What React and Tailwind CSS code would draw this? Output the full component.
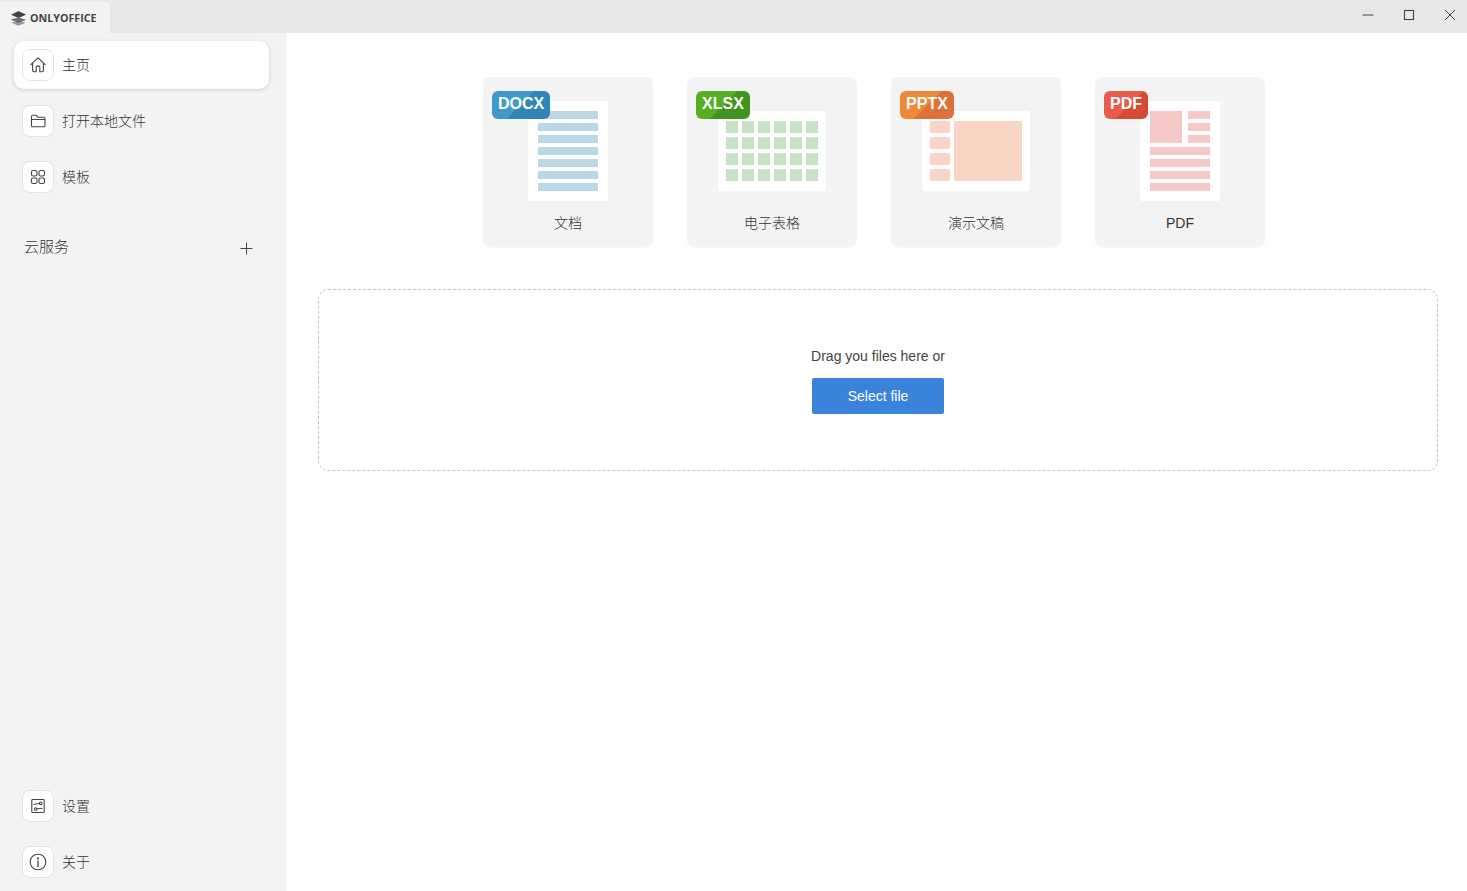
import React from "react";

const cjk = "font-['Liberation_Sans','Noto_Sans_CJK_SC',sans-serif]";

function Range({ n }) {
  return Array.from({ length: n }, (_, i) => i);
}

const I = { fill: "none", stroke: "#444", strokeWidth: 1.1, strokeLinejoin: "round", strokeLinecap: "round" };

function HomeIcon() {
  return (
    <svg width="16" height="16" viewBox="0 0 16 16" {...I}>
      <path d="M.8 7.6 8 .9l7.2 6.7M2.6 6.3v7.2c0 .7.5 1.2 1.2 1.2h2.4V10c0-.5.4-.9.9-.9h1.800c.5 0 .9.4.9.9v4.700h2.400c.7 0 1.200-.5 1.200-1.200V6.300" />
    </svg>
  );
}
function FolderIcon() {
  return (
    <svg width="16" height="16" viewBox="0 0 16 16" {...I}>
      <path d="M1.500 3.500c0-.8.5-1.300 1.300-1.300h3.400l1.500 2h6c.8 0 1.300.5 1.300 1.300v7c0 .8-.5 1.300-1.300 1.300H2.800c-.8 0-1.300-.5-1.300-1.300zM1.500 6.500h13" />
    </svg>
  );
}
function GridIcon() {
  return (
    <svg width="16" height="16" viewBox="0 0 16 16" {...I}>
      <rect x="1.500" y="1.500" width="5.500" height="5.500" rx="1.600" />
      <rect x="9" y="1.500" width="5.500" height="5.500" rx="1.600" />
      <rect x="1.500" y="9" width="5.500" height="5.500" rx="1.600" />
      <rect x="9" y="9" width="5.500" height="5.500" rx="1.600" />
    </svg>
  );
}
function SettingsIcon() {
  return (
    <svg width="16" height="16" viewBox="0 0 16 16" {...I}>
      <rect x="1.800" y="1.500" width="12.400" height="13" rx=".8" />
      <path d="M3.800 6.200 9.300 5.500M12.300 10.200l-5 .6" />
      <circle cx="10.700" cy="5.300" r="1.300" />
      <circle cx="5.700" cy="11" r="1.300" />
    </svg>
  );
}
function InfoIcon() {
  return (
    <svg width="18" height="18" viewBox="0 0 18 18" {...I}>
      <circle cx="9" cy="9" r="7.800" />
      <path d="M9 8v5.400" strokeWidth="1.300" />
      <circle cx="9" cy="5.400" r=".5" fill="#444" />
    </svg>
  );
}
function Logo() {
  return (
    <svg width="15" height="15" viewBox="0 0 15 15">
      <path d="M7.500 9.700.4 11.800l6.400 2.800c.4.2 1 .2 1.400 0l6.400-2.800z" fill="#9a9a9a" />
      <path d="M7.500 6.700 1 8.100.4 8.600c0 .2 0 .3.2.4l6.200 2.800c.4.2 1 .2 1.400 0L14.400 9c.2-.1.2-.2.2-.4z" fill="#6f6f6f" />
      <path d="M6.800.4.6 3.200c-.3.2-.3.5 0 .7l6.200 2.800c.4.2 1 .2 1.400 0l6.200-2.800c.3-.2.3-.5 0-.7L8.200.4c-.4-.2-1-.2-1.400 0z" fill="#444" />
    </svg>
  );
}

function NavItem({ icon, label, active }) {
  return (
    <div className={"flex h-12 w-[255px] items-center rounded-[10px] pl-2 " + (active ? "bg-white shadow-[0_1px_4px_rgba(0,0,0,0.15)]" : "")}>
      <div className="flex h-8 w-8 items-center justify-center rounded-lg border border-[#e3e3e3] bg-white">{icon}</div>
      <span className={"ml-2 text-sm font-light text-[#333] " + cjk}>{label}</span>
    </div>
  );
}

function Badge({ text, className }) {
  return (
    <div className={"absolute left-[9px] top-[14px] flex h-7 items-center justify-center rounded-[6px] pb-[2px] text-base font-bold text-white font-['Liberation_Sans',sans-serif] " + className}>
      {text}
    </div>
  );
}

function Card({ label, badge, children }) {
  return (
    <div className="relative flex h-[170px] w-[170px] flex-col items-center rounded-lg bg-[#f3f3f3] shadow-[0_1px_2px_rgba(0,0,0,0.04)]">
      <div className="mt-6 flex h-[100px] items-center justify-center">{children}</div>
      <div className={"mt-3 text-sm font-light leading-5 text-[#333] " + cjk}>{label}</div>
      {badge}
    </div>
  );
}

function DocPage() {
  return (
    <div className="flex h-[100px] w-20 flex-col items-center gap-1 rounded-[2px] bg-white pt-2.5">
      {Range({ n: 7 }).map((i) => (
        <div key={i} className="h-2 w-[60px] rounded-[1px] bg-[#bcd7e5]" />
      ))}
    </div>
  );
}

function SheetPage() {
  return (
    <div className="grid h-20 w-[108px] grid-cols-[repeat(6,12px)] content-start justify-center gap-1 rounded-[2px] bg-white pt-2.5">
      {Range({ n: 24 }).map((i) => (
        <div key={i} className="h-3 w-3 bg-[#c6e2c4]" />
      ))}
    </div>
  );
}

function SlidePage() {
  return (
    <div className="flex h-20 w-[108px] gap-1 rounded-[2px] bg-white pl-2 pt-2.5">
      <div className="flex w-5 flex-col gap-1">
        {Range({ n: 4 }).map((i) => (
          <div key={i} className="h-3 w-5 rounded-[1px] bg-[#f9d5c5]" />
        ))}
      </div>
      <div className="h-[60px] w-[68px] rounded-[1px] bg-[#f9d5c5]" />
    </div>
  );
}

function PdfPage() {
  return (
    <div className="flex h-[100px] w-20 flex-col gap-1 rounded-[2px] bg-white px-2.5 pt-2.5">
      <div className="flex justify-between">
        <div className="h-8 w-8 bg-[#f6c9c7]" />
        <div className="flex w-[22px] flex-col gap-1">
          {Range({ n: 3 }).map((i) => (
            <div key={i} className="h-2 bg-[#f6c9c7]" />
          ))}
        </div>
      </div>
      {Range({ n: 4 }).map((i) => (
        <div key={i} className="h-2 w-[60px] rounded-[1px] bg-[#f6c9c7]" />
      ))}
    </div>
  );
}

export default function App() {
  return (
    <div className="flex h-screen w-full flex-col overflow-hidden bg-white">
      <header className="flex h-[33px] shrink-0 items-end justify-between bg-[#e8e8e8]">
        <div className="flex h-[31px] w-[110px] items-center gap-1 rounded-tr-sm bg-[#f3f3f3] pl-[11px] pt-[2px]">
          <Logo />
          <span className="text-[10.7px] font-bold text-[#444] font-['Open_Sans',sans-serif]">ONLYOFFICE</span>
        </div>
        <div className="flex h-[33px] items-center">
          <button className="flex h-[33px] w-[41px] items-center justify-center pb-[3px] pl-[6px]">
            <svg width="12" height="12" viewBox="0 0 12 12"><path d="M.5 6h11" stroke="#444" strokeWidth="1" /></svg>
          </button>
          <button className="flex h-[33px] w-[41px] items-center justify-center pb-[3px] pl-[6px]">
            <svg width="12" height="12" viewBox="0 0 12 12"><rect x="1.500" y="1.500" width="9" height="9" fill="none" stroke="#444" strokeWidth="1.100" /></svg>
          </button>
          <button className="flex h-[33px] w-[41px] items-center justify-center pb-[3px] pl-[6px]">
            <svg width="12" height="12" viewBox="0 0 12 12"><path d="m1 1 10 10M11 1 1 11" stroke="#444" strokeWidth="1" /></svg>
          </button>
        </div>
      </header>

      <div className="flex min-h-0 flex-1">
        <aside className="flex w-[286px] shrink-0 flex-col bg-[#f3f3f3] pb-[5px] pl-3.5 pt-2">
          <div className="flex flex-col gap-2">
            <NavItem active icon={<HomeIcon />} label="主页" />
            <NavItem icon={<FolderIcon />} label="打开本地文件" />
            <NavItem icon={<GridIcon />} label="模板" />
          </div>
          <div className="mt-[35px] flex w-[239px] items-center justify-between pl-2.5">
            <span className={"text-[15px] font-light text-[#333] " + cjk}>云服务</span>
            <svg width="13" height="13" viewBox="0 0 13 13" className="mt-0.5"><path d="M6.500.5v12M.5 6.500h12" stroke="#444" strokeWidth="1" /></svg>
          </div>
          <div className="mt-auto flex flex-col gap-2">
            <NavItem icon={<SettingsIcon />} label="设置" />
            <NavItem icon={<InfoIcon />} label="关于" />
          </div>
        </aside>

        <main className="min-w-0 flex-1 pl-8 pr-[29px] pt-11">
          <div className="ml-[165px] flex gap-[34px]">
            <Card
              label="文档"
              badge={<Badge text="DOCX" className="w-[58px] bg-[linear-gradient(135deg,#3f99c9_50%,#2f85b8_50%)]" />}
            >
              <DocPage />
            </Card>
            <Card
              label="电子表格"
              badge={<Badge text="XLSX" className="w-[54px] bg-[linear-gradient(135deg,#57ae22_51%,#3f9420_51%)]" />}
            >
              <SheetPage />
            </Card>
            <Card
              label="演示文稿"
              badge={<Badge text="PPTX" className="w-[54px] bg-[linear-gradient(135deg,#ef893a_51%,#dd7138_51%)]" />}
            >
              <SlidePage />
            </Card>
            <Card
              label="PDF"
              badge={<Badge text="PDF" className="w-11 bg-[linear-gradient(135deg,#e95c4b_55%,#d44a33_55%)]" />}
            >
              <PdfPage />
            </Card>
          </div>

          <div className="mt-[42px] flex h-[182px] flex-col items-center rounded-[10px] border border-dashed border-[#c4c4c4] pt-[57px]">
            <p className="text-sm leading-[18px] text-[#444] font-['Liberation_Sans',sans-serif]">Drag you files here or</p>
            <button className="mt-[13px] h-9 w-[132px] rounded-[2px] bg-[#3a83dd] text-sm text-white font-['Liberation_Sans',sans-serif]">Select file</button>
          </div>
        </main>
      </div>
    </div>
  );
}
